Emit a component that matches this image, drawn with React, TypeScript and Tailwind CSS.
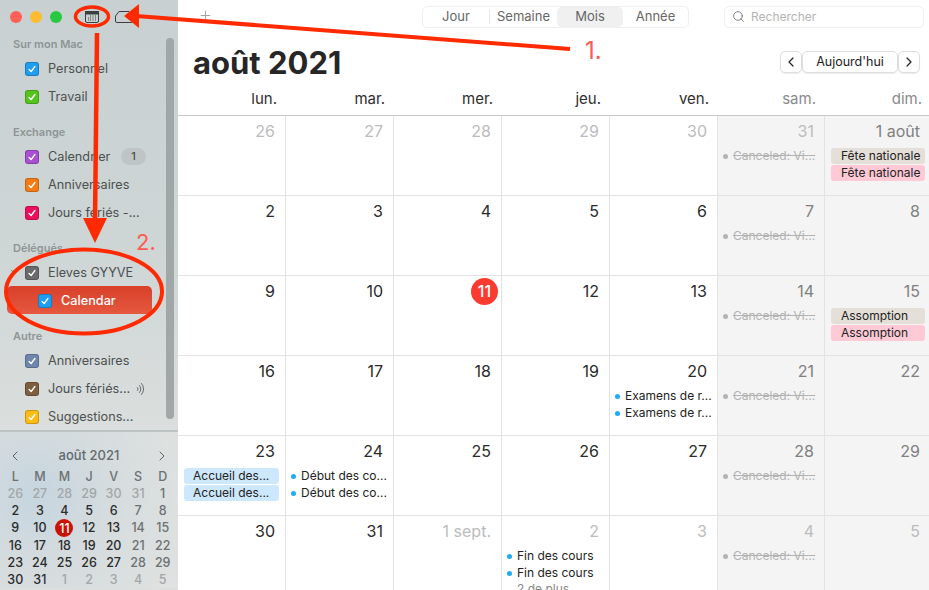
import { ChevronLeft, ChevronRight, Plus, Search } from "lucide-react";

type Ev = { kind: "pill" | "dot" | "canceled" | "more"; label: string; color?: string };
type Cell = { day: string; tone: "now" | "off" | "weekend"; events?: Ev[]; today?: boolean };

const canceled: Ev = { kind: "canceled", label: "Canceled: Vi..." };
const dot = (label: string): Ev => ({ kind: "dot", label });
const pill = (label: string, color: string): Ev => ({ kind: "pill", label, color });

const BEIGE = "bg-[#e5dfd9]";
const PINK = "bg-[#ffc9d6]";
const BLUE = "bg-[#cde8fc]";

const cells: Cell[] = [
  { day: "26", tone: "off" },
  { day: "27", tone: "off" },
  { day: "28", tone: "off" },
  { day: "29", tone: "off" },
  { day: "30", tone: "off" },
  { day: "31", tone: "off", events: [canceled] },
  { day: "1 août", tone: "weekend", events: [pill("Fête nationale", BEIGE), pill("Fête nationale", PINK)] },
  { day: "2", tone: "now" },
  { day: "3", tone: "now" },
  { day: "4", tone: "now" },
  { day: "5", tone: "now" },
  { day: "6", tone: "now" },
  { day: "7", tone: "weekend", events: [canceled] },
  { day: "8", tone: "weekend" },
  { day: "9", tone: "now" },
  { day: "10", tone: "now" },
  { day: "11", tone: "now", today: true },
  { day: "12", tone: "now" },
  { day: "13", tone: "now" },
  { day: "14", tone: "weekend", events: [canceled] },
  { day: "15", tone: "weekend", events: [pill("Assomption", BEIGE), pill("Assomption", PINK)] },
  { day: "16", tone: "now" },
  { day: "17", tone: "now" },
  { day: "18", tone: "now" },
  { day: "19", tone: "now" },
  { day: "20", tone: "now", events: [dot("Examens de r..."), dot("Examens de r...")] },
  { day: "21", tone: "weekend", events: [canceled] },
  { day: "22", tone: "weekend" },
  { day: "23", tone: "now", events: [pill("Accueil des...", BLUE), pill("Accueil des...", BLUE)] },
  { day: "24", tone: "now", events: [dot("Début des co..."), dot("Début des co...")] },
  { day: "25", tone: "now" },
  { day: "26", tone: "now" },
  { day: "27", tone: "now" },
  { day: "28", tone: "weekend", events: [canceled] },
  { day: "29", tone: "weekend" },
  { day: "30", tone: "now" },
  { day: "31", tone: "now" },
  { day: "1 sept.", tone: "off" },
  { day: "2", tone: "off", events: [dot("Fin des cours"), dot("Fin des cours"), { kind: "more", label: "2 de plus" }] },
  { day: "3", tone: "off" },
  { day: "4", tone: "off", events: [canceled] },
  { day: "5", tone: "off" },
];

const weekdays = ["lun.", "mar.", "mer.", "jeu.", "ven.", "sam.", "dim."];

function Check({ color }: { color: string }) {
  return (
    <span className={`flex h-[14px] w-[14px] shrink-0 items-center justify-center rounded-[3px] border border-black/20 ${color}`}>
      <svg viewBox="0 0 12 12" className="h-[10px] w-[10px]" fill="none" stroke="white" strokeWidth="1.6" strokeLinecap="round" strokeLinejoin="round">
        <path d="M2.5 6.5 5 9l4.5-6" />
      </svg>
    </span>
  );
}

function CalRow({ color, label, badge, wave, chevron }: { color: string; label: string; badge?: string; wave?: boolean; chevron?: boolean }) {
  return (
    <div className="relative flex h-[28px] items-center pl-[25px] pt-[1px]">
      {chevron && <ChevronRight className="absolute left-[8px] h-[10px] w-[10px] text-[#444]" strokeWidth={2} />}
      <Check color={color} />
      <span className="ml-[9px] text-[12.7px] text-[#4b5050]">{label}</span>
      {badge && (
        <span className="ml-auto mr-[32px] flex h-[17px] w-[25px] items-center justify-center rounded-full bg-[#bfc5c5] text-[11px] font-medium text-[#4b5050]">
          {badge}
        </span>
      )}
      {wave && (
        <svg viewBox="0 0 10 14" className="absolute left-[136px] h-[14px] w-[10px]" fill="none" stroke="#5a5f5f" strokeWidth="0.9" strokeLinecap="round">
          <path d="M1.5 5.5a2 2 0 0 1 0 3" />
          <path d="M3.5 3.5a5 5 0 0 1 0 7" />
          <path d="M5.5 1.5a8 8 0 0 1 0 11" />
        </svg>
      )}
    </div>
  );
}

function SideHeading({ children, className = "" }: { children: string; className?: string }) {
  return <div className={`flex h-[20px] items-center pl-[13px] text-[11px] font-semibold text-[#8e9595] ${className}`}>{children}</div>;
}

const miniDays = [
  "26", "27", "28", "29", "30", "31", "1",
  "2", "3", "4", "5", "6", "7", "8",
  "9", "10", "11", "12", "13", "14", "15",
  "16", "17", "18", "19", "20", "21", "22",
  "23", "24", "25", "26", "27", "28", "29",
  "30", "31", "1", "2", "3", "4", "5",
];

function miniTone(i: number) {
  if (i < 6 || i > 36) return "text-[#a2a7a7]";
  if (i % 7 >= 5) return "text-[#6d7171]";
  return "text-[#2a2c2c]";
}

function MiniCalendar() {
  return (
    <div className="border-t-2 border-[#bcc3c3] bg-[radial-gradient(circle_at_20%_40%,#c6d5df_0%,#d6dcde_45%,#dfe2e0_100%)] px-[3px] pt-[14px]">
      <div className="relative mb-[2px] flex h-[20px] items-center justify-center text-[13px] font-medium text-[#656a6a]">
        <ChevronLeft className="absolute left-[4px] h-[16px] w-[16px] text-[#5d6262]" strokeWidth={1.5} />
        août 2021
        <ChevronRight className="absolute right-[5px] h-[16px] w-[16px] text-[#5d6262]" strokeWidth={1.5} />
      </div>
      <div className="grid grid-cols-7 text-center text-[12.5px] font-medium leading-[17px]">
        {["L", "M", "M", "J", "V", "S", "D"].map((d, i) => (
          <div key={i} className="text-[#6d7171]">{d}</div>
        ))}
        {miniDays.map((d, i) =>
          i === 16 ? (
            <div key={i} className="flex items-center justify-center">
              <span className="flex h-[18px] w-[18px] items-center justify-center rounded-full bg-[#cc1105] text-white">{d}</span>
            </div>
          ) : (
            <div key={i} className={miniTone(i)}>{d}</div>
          ),
        )}
      </div>
    </div>
  );
}

function Sidebar() {
  return (
    <aside className="relative flex h-[590px] w-[178px] shrink-0 flex-col overflow-hidden bg-[linear-gradient(180deg,#c8d0d1_0%,#ced5d5_40%,#dbdfde_75%)] font-['Inter',sans-serif]">
      <div className="flex h-[34px] items-center gap-[8px] pl-[10px]">
        <span className="h-[12px] w-[12px] rounded-full bg-[#ff5f57]" />
        <span className="h-[12px] w-[12px] rounded-full bg-[#febc2e]" />
        <span className="h-[12px] w-[12px] rounded-full bg-[#28c840]" />
        <svg viewBox="0 0 14 12" className="ml-[15px] h-[12px] w-[14px]" fill="none" stroke="#3c3f3f">
          <rect x="0.5" y="0.5" width="13" height="11" rx="1.5" />
          <rect x="0.5" y="0.5" width="13" height="2.5" fill="#3c3f3f" />
          <path d="M5 5h1M7.5 5h1M10 5h1M3 7h1M5 7h1M7.5 7h1M10 7h1M3 9h1M5 9h1M7.5 9h1M10 9h1" strokeWidth="1" />
        </svg>
        <svg viewBox="0 0 18 12" className="ml-[8px] h-[12px] w-[18px]" fill="none" stroke="#3c3f3f">
          <path d="M4 .5h10l3.5 4.5v5a1.5 1.5 0 0 1-1.5 1.5H2A1.5 1.5 0 0 1 .5 10V5z" />
        </svg>
      </div>

      <SideHeading>Sur mon Mac</SideHeading>
      <CalRow color="bg-[#1e9df1]" label="Personnel" />
      <CalRow color="bg-[#56c41f]" label="Travail" />

      <SideHeading className="mt-[12px]">Exchange</SideHeading>
      <CalRow color="bg-[#a84fd3]" label="Calendrier" badge="1" />
      <CalRow color="bg-[#f57c14]" label="Anniversaires" />
      <CalRow color="bg-[#ee0f5c]" label="Jours fériés -..." />

      <SideHeading className="mt-[12px]">Délégués</SideHeading>
      <CalRow color="bg-[#6b6b6b]" label="Eleves GYYVE" chevron />
      <div className="mx-[7px] flex h-[28px] w-[145px] items-center rounded-[5px] bg-[linear-gradient(180deg,#d8402a,#e5583f)] pl-[31px] pt-[1px]">
        <Check color="bg-[#1e9df1]" />
        <span className="ml-[9px] text-[12.7px] font-medium text-white">Calendar</span>
      </div>

      <SideHeading className="mt-[12px]">Autre</SideHeading>
      <CalRow color="bg-[#6f86ad]" label="Anniversaires" />
      <CalRow color="bg-[#7f5d3f]" label="Jours fériés..." wave />
      <CalRow color="bg-[#fbbc13]" label="Suggestions..." />

      <MiniCalendar />

      <div className="absolute left-[166px] top-[38px] h-[381px] w-[8px] rounded-full bg-[#a1a7a7]" />
    </aside>
  );
}

function Toolbar() {
  return (
    <div className="flex h-[32px] items-center pt-[1px]">
      <Plus className="ml-[20px] mt-[-2px] h-[15px] w-[15px] text-[#999999]" strokeWidth={1.4} />
      <div className="ml-[209px] flex h-[22px] w-[267px] items-center rounded-[5px] border border-[#efefef] text-[13px] text-[#666]">
        <span className="w-[66px] text-center">Jour</span>
        <span className="h-[14px] w-px bg-[#e8e8e8]" />
        <span className="w-[67px] text-center">Semaine</span>
        <span className="flex h-full w-[66px] items-center justify-center rounded-[5px] bg-[#f0f0f0]">Mois</span>
        <span className="flex-1 text-center">Année</span>
      </div>
      <div className="ml-[35px] flex h-[22px] w-[200px] items-center rounded-[5px] border border-[#efefef] pl-[7px] text-[12px] text-[#b3b3b3]">
        <Search className="h-[13px] w-[13px] text-[#6e6e6e]" strokeWidth={1.6} />
        <span className="ml-[6px]">Rechercher</span>
      </div>
    </div>
  );
}

function TitleRow() {
  return (
    <div className="flex h-[52px] items-center">
      <h1 className="ml-[15px] mt-[8px] text-[31px] font-bold leading-none text-[#262626]">août 2021</h1>
      <div className="ml-auto mr-[9px] mt-[8px] flex h-[22px] text-[#222]">
        <button className="flex w-[22px] items-center justify-center rounded-[5px] border border-[#dedede] shadow-[0_1px_1px_rgba(0,0,0,0.08)]">
          <ChevronLeft className="h-[16px] w-[16px]" strokeWidth={1.8} />
        </button>
        <button className="w-[96px] rounded-[5px] border border-[#dedede] text-[12.5px] shadow-[0_1px_1px_rgba(0,0,0,0.08)]">Aujourd'hui</button>
        <button className="flex w-[22px] items-center justify-center rounded-[5px] border border-[#dedede] shadow-[0_1px_1px_rgba(0,0,0,0.08)]">
          <ChevronRight className="h-[16px] w-[16px]" strokeWidth={1.8} />
        </button>
      </div>
    </div>
  );
}

function EventLine({ ev, sunday }: { ev: Ev; sunday: boolean }) {
  if (ev.kind === "pill") {
    return (
      <div className={`ml-[6px] flex h-[16px] items-center rounded-[3px] text-[12px] text-[#222] ${sunday ? "mr-[4px] pl-[10px]" : "mr-[6px] pl-[9px]"} ${ev.color}`}>
        {ev.label}
      </div>
    );
  }
  if (ev.kind === "more") {
    return <div className="flex h-[13px] items-center pl-[15px] text-[12px] text-[#888]">{ev.label}</div>;
  }
  const off = ev.kind === "canceled";
  return (
    <div className="flex h-[16px] items-center pl-[5px] text-[12px] whitespace-nowrap">
      <span className={`h-[5px] w-[5px] shrink-0 rounded-full ${off ? "bg-[#b4b4b4]" : "bg-[#1badf8]"}`} />
      <span className={`ml-[5px] ${off ? "text-[#b2b2b2] line-through" : "text-[#222]"}`}>{ev.label}</span>
    </div>
  );
}

function DayCell({ cell, col }: { cell: Cell; col: number }) {
  const toneClass = cell.tone === "now" ? "text-[#2a2a2a]" : cell.tone === "weekend" ? "text-[#808080]" : "text-[#bcbcbc]";
  return (
    <div className={`h-[80px] overflow-hidden border-r border-b border-[#e2e2e2] ${col >= 5 ? "bg-[#f4f4f4]" : "bg-white"} ${col === 6 ? "border-r-0" : ""}`}>
      <div className={`flex h-[32px] justify-end pt-[5px] text-[16px] leading-[20px] ${col === 6 ? "pr-[9px]" : "pr-[10px]"} ${toneClass}`}>
        {cell.today ? (
          <span className="mr-[-7px] mt-[-3.5px] flex h-[27px] w-[27px] items-center justify-center rounded-full bg-[#fb3a30] font-medium text-white">{cell.day}</span>
        ) : (
          cell.day
        )}
      </div>
      <div className="flex flex-col gap-[1px]">
        {cell.events?.map((ev, i) => <EventLine key={i} ev={ev} sunday={col === 6} />)}
      </div>
    </div>
  );
}

function MonthGrid() {
  const cols = "grid grid-cols-[108px_108px_108px_108px_108px_107px_104px]";
  return (
    <>
      <div className={`${cols} h-[32px] border-b border-[#c9c9c9]`}>
        {weekdays.map((d, i) => (
          <div key={d} className={`pt-[5px] text-right text-[15px] leading-[20px] ${i >= 5 ? "text-[#8a8a8a]" : "text-[#2e2e2e]"} ${i === 6 ? "pr-[7px]" : "pr-[9px]"}`}>
            {d}
          </div>
        ))}
      </div>
      <div className={cols}>
        {cells.map((c, i) => <DayCell key={i} cell={c} col={i % 7} />)}
      </div>
    </>
  );
}

function Annotations() {
  const red = "#ff2a00";
  return (
    <>
      <svg viewBox="0 0 929 590" className="pointer-events-none absolute inset-0 h-[590px] w-[929px]" fill="none">
        <path d="M570 49 136 16" stroke={red} strokeWidth="4" />
        <path d="M124 16 139 4v24z" fill={red} />
        <ellipse cx="92" cy="16.5" rx="16.5" ry="9.5" stroke={red} strokeWidth="3.5" />
        <path d="M97 33 95 222" stroke={red} strokeWidth="4.5" />
        <path d="M83 218h24l-12 25z" fill={red} />
        <ellipse cx="84" cy="291.5" rx="78" ry="42" stroke={red} strokeWidth="4" />
      </svg>
      <span className="absolute left-[585px] top-[38px] text-[24px] leading-[26px] text-[#ff5a50]">1.</span>
      <span className="absolute left-[136px] top-[229px] text-[22px] leading-[26px] text-[#ff5a50]">2.</span>
    </>
  );
}

export default function App() {
  return (
    <div className="relative flex h-[590px] w-[929px] overflow-hidden bg-white font-['Inter',sans-serif]">
      <Sidebar />
      <main className="flex-1 overflow-hidden">
        <Toolbar />
        <TitleRow />
        <MonthGrid />
      </main>
      <Annotations />
    </div>
  );
}
